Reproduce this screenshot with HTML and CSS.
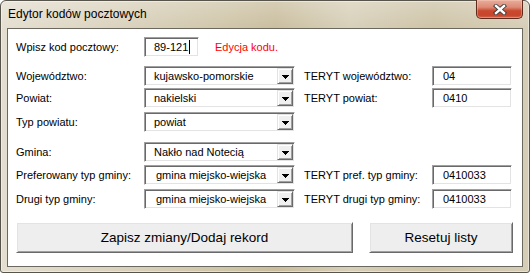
FILE: index.html
```html
<!DOCTYPE html>
<html lang="pl">
<head>
  <meta charset="UTF-8">
  <title>Edytor kodów pocztowych</title>
  <link rel="stylesheet" href="styles.css">
</head>
<body>
  <div class="window">
    <div class="titlebar">
      <span class="title">Edytor kodów pocztowych</span>
      <button class="close" aria-label="Zamknij">
        <svg width="14" height="11" viewBox="0 0 14 11">
          <path d="M3 2 L11 9 M11 2 L3 9" stroke="#3a3a3a" stroke-width="4.2" stroke-linecap="square" fill="none"/>
          <path d="M3 2 L11 9 M11 2 L3 9" stroke="#fff" stroke-width="2.4" stroke-linecap="square" fill="none"/>
        </svg>
      </button>
    </div>

    <div class="client">
      <div class="row row-code">
        <label class="lbl">Wpisz kod pocztowy:</label>
        <div class="field code">89-121<span class="caret"></span></div>
        <span class="note">Edycja kodu.</span>
      </div>

      <div class="row gap-9">
        <label class="lbl">Województwo:</label>
        <div class="combo"><span class="val">kujawsko-pomorskie</span><span class="drop"><svg width="7" height="4"><rect x="0" y="0" width="7" height="1"/><rect x="1" y="1" width="5" height="1"/><rect x="2" y="2" width="3" height="1"/><rect x="3" y="3" width="1" height="1"/></svg></span></div>
        <label class="lbl">TERYT województwo:</label>
        <div class="field">04</div>
      </div>

      <div class="row gap-2">
        <label class="lbl">Powiat:</label>
        <div class="combo"><span class="val">nakielski</span><span class="drop"><svg width="7" height="4"><rect x="0" y="0" width="7" height="1"/><rect x="1" y="1" width="5" height="1"/><rect x="2" y="2" width="3" height="1"/><rect x="3" y="3" width="1" height="1"/></svg></span></div>
        <label class="lbl">TERYT powiat:</label>
        <div class="field">0410</div>
      </div>

      <div class="row gap-4">
        <label class="lbl">Typ powiatu:</label>
        <div class="combo"><span class="val">powiat</span><span class="drop"><svg width="7" height="4"><rect x="0" y="0" width="7" height="1"/><rect x="1" y="1" width="5" height="1"/><rect x="2" y="2" width="3" height="1"/><rect x="3" y="3" width="1" height="1"/></svg></span></div>
      </div>

      <div class="row gap-10">
        <label class="lbl">Gmina:</label>
        <div class="combo"><span class="val">Nakło nad Notecią</span><span class="drop"><svg width="7" height="4"><rect x="0" y="0" width="7" height="1"/><rect x="1" y="1" width="5" height="1"/><rect x="2" y="2" width="3" height="1"/><rect x="3" y="3" width="1" height="1"/></svg></span></div>
      </div>

      <div class="row gap-3">
        <label class="lbl">Preferowany typ gminy:</label>
        <div class="combo"><span class="val wide">gmina miejsko-wiejska</span><span class="drop"><svg width="7" height="4"><rect x="0" y="0" width="7" height="1"/><rect x="1" y="1" width="5" height="1"/><rect x="2" y="2" width="3" height="1"/><rect x="3" y="3" width="1" height="1"/></svg></span></div>
        <label class="lbl">TERYT pref. typ gminy:</label>
        <div class="field">0410033</div>
      </div>

      <div class="row gap-4">
        <label class="lbl">Drugi typ gminy:</label>
        <div class="combo"><span class="val wide">gmina miejsko-wiejska</span><span class="drop"><svg width="7" height="4"><rect x="0" y="0" width="7" height="1"/><rect x="1" y="1" width="5" height="1"/><rect x="2" y="2" width="3" height="1"/><rect x="3" y="3" width="1" height="1"/></svg></span></div>
        <label class="lbl">TERYT drugi typ gminy:</label>
        <div class="field">0410033</div>
      </div>

      <div class="buttons">
        <button class="btn btn-save">Zapisz zmiany/Dodaj rekord</button>
        <button class="btn btn-reset">Resetuj listy</button>
      </div>
    </div>
  </div>
</body>
</html>
```

FILE: styles.css
```css
* {
  margin: 0;
  padding: 0;
  box-sizing: border-box;
}

body {
  width: 530px;
  height: 273px;
  background: #fff;
  overflow: hidden;
  font-family: "Liberation Sans", Arial, sans-serif;
  font-size: 11px;
  color: #000;
}

/* window chrome */
.window {
  display: flex;
  flex-direction: column;
  width: 530px;
  height: 273px;
  padding: 0 6px 5px 6px;
  border: 1px solid #57544b;
  border-radius: 6px 6px 3px 3px;
  background:
    linear-gradient(180deg, rgba(255, 255, 255, 0.25), rgba(255, 255, 255, 0) 30px),
    linear-gradient(90deg, #e4ded0 0%, #dad2bd 22%, #cfc5a8 42%, #c9bd9d 52%, #d7cfb8 66%, #cdc2a5 82%, #d6cdb6 100%);
  box-shadow: inset 0 0 0 1px rgba(255, 255, 255, 0.45);
}

.titlebar {
  display: flex;
  align-items: flex-start;
  height: 27px;
  padding-left: 1px;
}

.title {
  font-size: 12px;
  line-height: 27px;
  color: #000;
}

.close {
  display: flex;
  align-items: center;
  justify-content: center;
  width: 47px;
  height: 19px;
  margin: -1px 0 0 auto;
  border: 1px solid #5e2a1e;
  border-top: none;
  border-radius: 0 0 5px 5px;
  background: linear-gradient(180deg, #e9ad9c 0%, #dc8a75 40%, #c9482e 60%, #c6452b 85%, #d36a4f 100%);
  box-shadow: inset 0 0 0 1px rgba(255, 220, 200, 0.35);
}

.client {
  flex: 1;
  padding: 8px 0 0 8px;
  background: #fff;
  border: 1px solid #6b6860;
}

/* form rows */
.row {
  display: grid;
  grid-template-columns: 128px 151px 9px 128px 80px;
  align-items: center;
  height: 20px;
}

.row .lbl:nth-of-type(2) {
  grid-column: 4;
}

.gap-2 { margin-top: 2px; }
.gap-3 { margin-top: 3px; }
.gap-4 { margin-top: 4px; }
.gap-9 { margin-top: 9px; }
.gap-10 { margin-top: 10px; }

.row-code {
  display: flex;
}

.row-code .lbl {
  width: 128px;
}

.lbl {
  white-space: nowrap;
}

.field {
  display: flex;
  align-items: center;
  height: 20px;
  padding-left: 10px;
  border: 1px solid;
  border-color: #a0a0a0 #fff #fff #a0a0a0;
  box-shadow: inset 1px 1px 0 #696969, inset -1px -1px 0 #e3e3e3;
  background: #fff;
}

.row .field {
  grid-column: 5;
}

.code {
  width: 55px;
  padding-left: 9px;
}

.caret {
  width: 1px;
  height: 14px;
  margin-left: 1px;
  background: #000;
}

.note {
  margin-left: 16px;
  color: #f00;
}

.combo {
  display: flex;
  align-items: center;
  height: 20px;
  padding: 1px;
  border: 1px solid;
  border-color: #a0a0a0 #fff #fff #a0a0a0;
  box-shadow: inset 1px 1px 0 #696969, inset -1px -1px 0 #e3e3e3;
  background: #fff;
}

.combo .val {
  flex: 1;
  padding-left: 8px;
  white-space: nowrap;
}

.combo .val.wide {
  padding-left: 10px;
}

.drop {
  display: flex;
  align-items: center;
  justify-content: center;
  width: 16px;
  height: 16px;
  padding-top: 1px;
  background: #f0f0f0;
  border: 1px solid;
  border-color: #e3e3e3 #696969 #696969 #e3e3e3;
  box-shadow: inset 1px 1px 0 #fff, inset -1px -1px 0 #a0a0a0;
}

.drop svg {
  display: block;
  fill: #000;
}

/* bottom buttons */
.buttons {
  display: flex;
  margin-top: 13px;
}

.btn {
  height: 31px;
  font-family: "Liberation Sans", Arial, sans-serif;
  font-size: 13.5px;
  color: #000;
  background: #eeeeee;
  border: 1px solid;
  border-color: #fff #696969 #696969 #fff;
  box-shadow: inset 1px 1px 0 #e3e3e3, inset -1px -1px 0 #a0a0a0;
}

.btn-save {
  width: 337px;
}

.btn-reset {
  width: 144px;
  margin-left: 16px;
}
```
